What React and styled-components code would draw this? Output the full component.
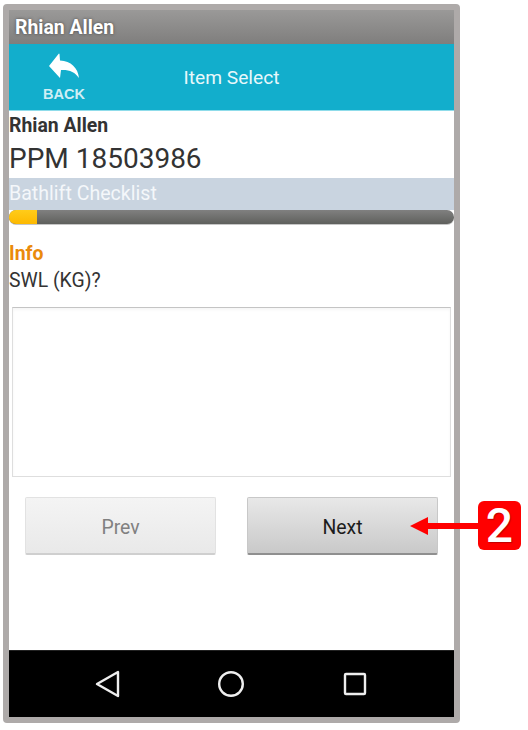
//===
// Import
//===

import styled, { createGlobalStyle } from 'styled-components';

//===
// Styled
//===

const GlobalStyle = createGlobalStyle`
    html, body {
        margin: 0;
        padding: 0;
        background: #fff;
        overflow: hidden;
    }
    * {
        box-sizing: border-box;
    }
`

const Page = styled.div`
    position: relative;
    width: 528px;
    height: 730px;
    padding: 4px 0 0 3px;
    font-family: Roboto, "Liberation Sans", sans-serif;
`

const Frame = styled.div`
    display: flex;
    flex-direction: column;
    width: 457px;
    height: 719px;
    border: 6px solid #aeaaa9;
    border-radius: 4px;
    background: #fff;
`

const TitleBar = styled.div`
    display: flex;
    align-items: center;
    height: 34px;
    padding: 1px 6px 0;
    background: linear-gradient(#9a9998, #7f7e7d);
    color: #fff;
    font-size: 19.4px;
    font-weight: 700;
    text-shadow: 0 0 3px rgba(40, 40, 40, 0.7);
`

const ActionBar = styled.div`
    display: grid;
    grid-template-columns: 110px 1fr 110px;
    align-items: center;
    height: 67px;
    background: #12aecc;
    border-bottom: 1px solid #8fdcea;
    color: #fff;
`

const BackButton = styled.div`
    display: flex;
    flex-direction: column;
    align-items: center;
    padding-top: 1px;
    svg {
        display: block;
        margin-bottom: 9px;
    }
`

const BackLabel = styled.span`
    font-family: "Liberation Sans", sans-serif;
    font-size: 14.5px;
    line-height: 15px;
    font-weight: 700;
    color: #cfeef5;
`

const ActionTitle = styled.div`
    padding-top: 1px;
    text-align: center;
    font-size: 19.2px;
    color: #e8f8fb;
`

const PersonName = styled.div`
    height: 29px;
    line-height: 29px;
    font-size: 19.4px;
    font-weight: 700;
    color: #333;
`

const JobNumber = styled.div`
    height: 38px;
    line-height: 37px;
    font-size: 28px;
    color: #333;
`

const ChecklistBand = styled.div`
    height: 32px;
    line-height: 31px;
    background: #c9d4e0;
    font-size: 19.6px;
    color: #f4f7fa;
`

const ProgressTrack = styled.div`
    height: 15px;
    border-radius: 7px;
    overflow: hidden;
    background: linear-gradient(#808080, #5f605d);
    border-bottom: 1px solid #c6c6c6;
`

const ProgressFill = styled.div`
    height: 100%;
    background: linear-gradient(#ffcc1a, #fdb900);
`

const Question = styled.div`
    padding-top: 15px;
`

const SectionLabel = styled.div`
    height: 27px;
    line-height: 27px;
    font-size: 19.4px;
    font-weight: 700;
    color: #ea8a0c;
`

const QuestionText = styled.div`
    height: 27px;
    line-height: 27px;
    font-size: 19.4px;
    color: #333;
`

const AnswerBox = styled.div`
    height: 170px;
    margin: 13px 3px 0;
    border: 1px solid #dedede;
    border-top: 1px solid #c4c4c4;
    background: #fff;
    box-shadow: inset 0 2px 3px rgba(0, 0, 0, 0.04);
`

const ButtonRow = styled.div`
    display: flex;
    justify-content: space-between;
    padding: 20px 16px 0;
`

const NavButton = styled.div`
    display: flex;
    align-items: center;
    justify-content: center;
    width: 191px;
    height: 58px;
    padding-top: 4px;
    border-radius: 2px;
    font-size: 19.4px;
    color: ${props => props.$primary ? '#1c1c1c' : '#808080'};
    background: ${props => props.$primary
        ? 'linear-gradient(#e8e8e8, #c9c9c9)'
        : 'linear-gradient(#f4f4f4, #e9e9e9)'};
    border: 1px solid ${props => props.$primary ? '#c8c8c8' : '#e2e2e2'};
    border-bottom: 2px solid ${props => props.$primary ? '#8f8f8f' : '#cfcfcf'};
`

const Spacer = styled.div`
    flex: 1;
`

const SystemBar = styled.div`
    display: grid;
    grid-template-columns: 122px 126px 24px;
    align-items: center;
    height: 67px;
    padding-left: 86px;
    background: #000;
    border-top: 1px solid #222;
    svg {
        display: block;
    }
`

const Callout = styled.div`
    position: absolute;
    left: 410px;
    top: 501px;
    display: flex;
    align-items: center;
`

const CalloutArrow = styled.svg`
    display: block;
`

const CalloutBadge = styled.div`
    display: flex;
    align-items: center;
    justify-content: center;
    width: 43px;
    height: 49px;
    border-radius: 6px;
    background: #ff0000;
    color: #fff;
    font-family: Roboto, sans-serif;
    font-size: 48px;
    font-weight: 500;
    line-height: 1;
    text-shadow: 1px 1px 1px rgba(130, 0, 0, 0.5);
`

//===
// Component
//===

const App = () => {
    return(
        <>
        <GlobalStyle />
        <Page>
            <Frame>
                <TitleBar>Rhian Allen</TitleBar>
                <ActionBar>
                    <BackButton>
                        <svg width="30" height="25" viewBox="0 0 30 25">
                            <path d="M0 13 L9.5 1 Q10 0 10.5 1 L11 7.5 C22 8 29 15 30 25 C26 19 20 16.5 12 17 L11 25 Z" fill="#fff" />
                        </svg>
                        <BackLabel>BACK</BackLabel>
                    </BackButton>
                    <ActionTitle>Item Select</ActionTitle>
                </ActionBar>
                <PersonName>Rhian Allen</PersonName>
                <JobNumber>PPM 18503986</JobNumber>
                <ChecklistBand>Bathlift Checklist</ChecklistBand>
                <ProgressTrack>
                    <ProgressFill style={{ width: '6.2%' }} />
                </ProgressTrack>
                <Question>
                    <SectionLabel>Info</SectionLabel>
                    <QuestionText>SWL (KG)?</QuestionText>
                </Question>
                <AnswerBox />
                <ButtonRow>
                    <NavButton>Prev</NavButton>
                    <NavButton $primary>Next</NavButton>
                </ButtonRow>
                <Spacer />
                <SystemBar>
                    <svg width="26" height="28" viewBox="0 0 26 28">
                        <path d="M2 14 L23 2 V26 Z" fill="none" stroke="#eee" strokeWidth="2.4" strokeLinejoin="round" />
                    </svg>
                    <svg width="28" height="28" viewBox="0 0 28 28">
                        <circle cx="14" cy="14" r="11.8" fill="none" stroke="#eee" strokeWidth="2.4" />
                    </svg>
                    <svg width="24" height="24" viewBox="0 0 24 24">
                        <rect x="2" y="2" width="20" height="20" rx="1" fill="none" stroke="#eee" strokeWidth="2.4" />
                    </svg>
                </SystemBar>
            </Frame>
            <Callout>
                <CalloutArrow width="68" height="20" viewBox="0 0 68 20">
                    <path d="M0 10 L18 1 V7 H68 V13 H18 V19 Z" fill="#ff0000" />
                </CalloutArrow>
                <CalloutBadge>2</CalloutBadge>
            </Callout>
        </Page>
        </>
    )
}

export default App
